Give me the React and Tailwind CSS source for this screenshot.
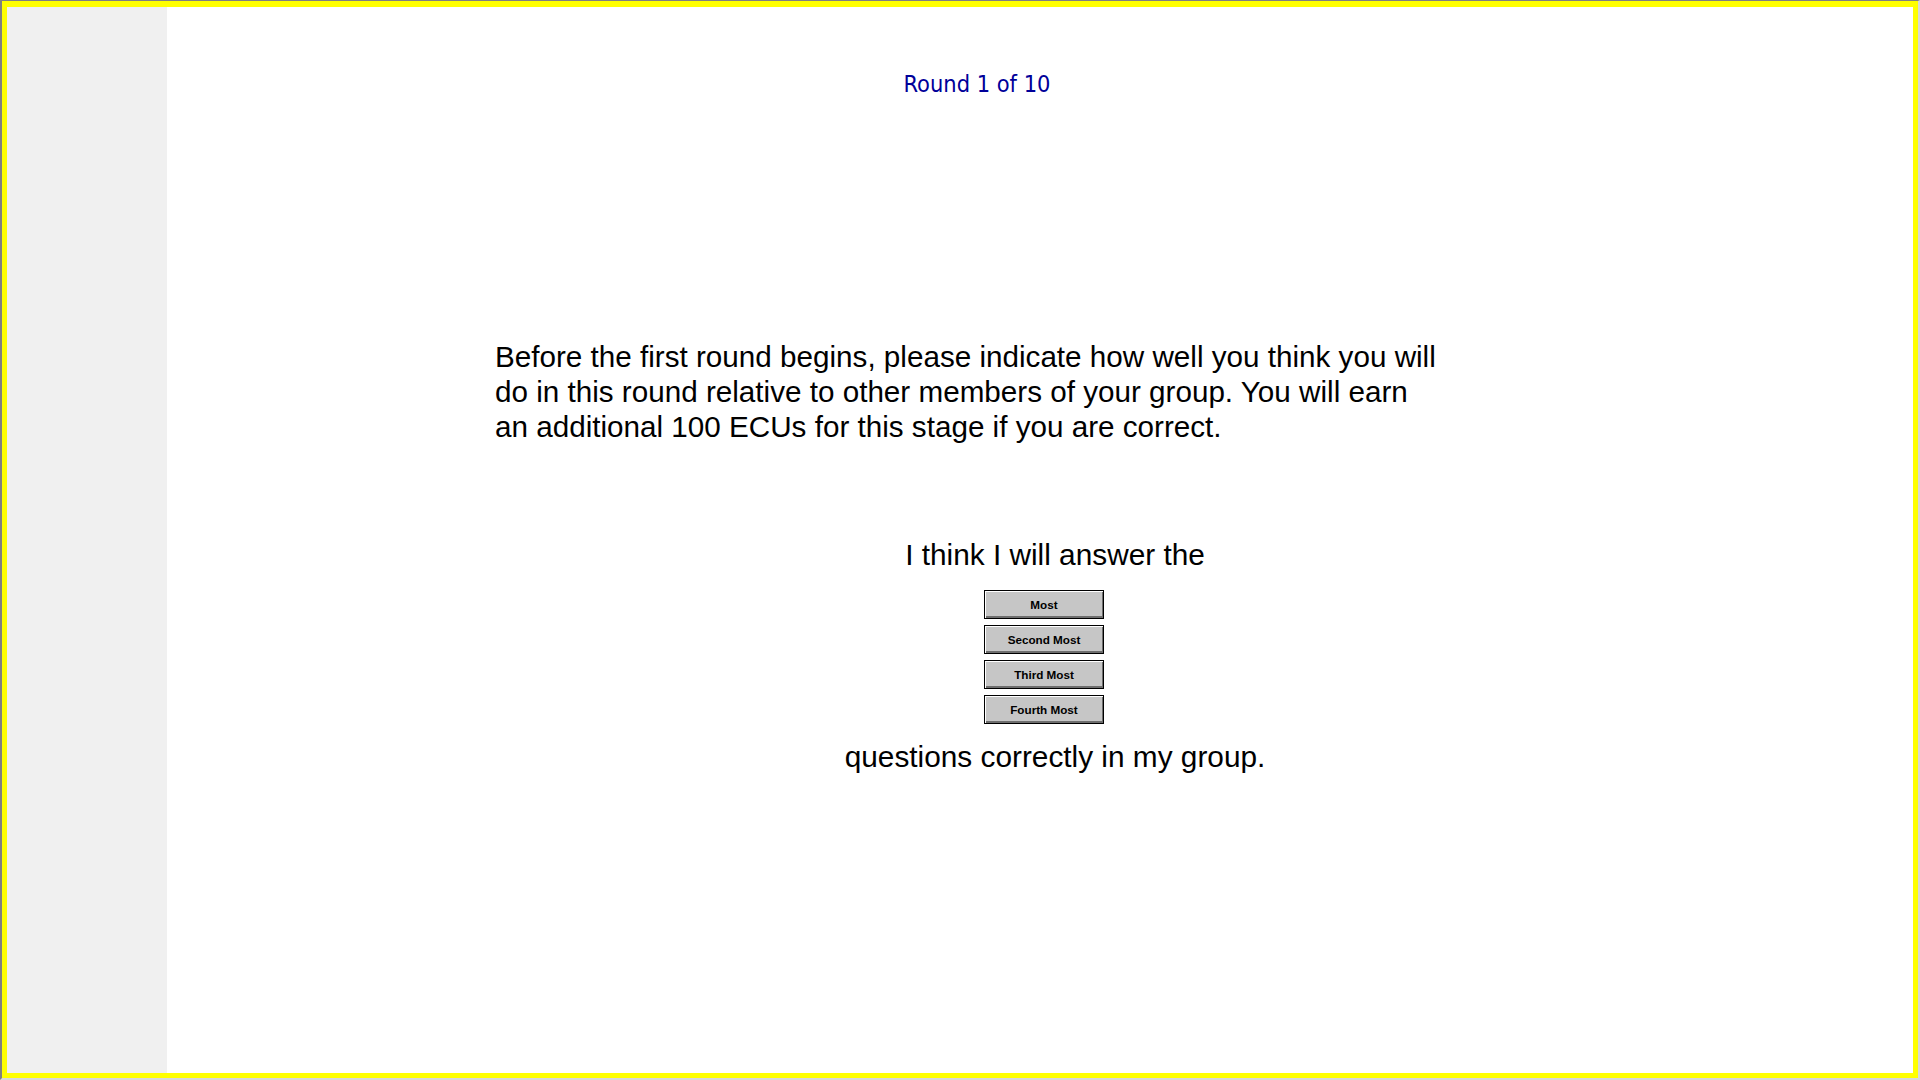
import React from 'react';

const choices = ['Most', 'Second Most', 'Third Most', 'Fourth Most'];

const App = () => {
  return (
    <div className="w-[1920px] h-[1080px] overflow-hidden bg-white border-t border-l-2 border-r-2 border-b-2 border-t-[#808080] border-l-[#808080] border-r-[#d8d8d8] border-b-[#d8d8d8]">
      <div className="h-full flex border-t-[6px] border-l-[5px] border-r-[5px] border-b-[5px] border-[#ffff00]">
        <div className="w-[160px] shrink-0 bg-[#f0f0f0]" />

        <div className="flex-1 flex flex-col bg-white font-['Liberation_Sans',Arial,sans-serif] text-black">
          <div className="pt-[63px] pr-[126px] text-center">
            <span className="font-['DejaVu_Sans_Condensed','DejaVu_Sans',sans-serif] font-stretch-condensed text-[23.4px] leading-[28px] text-[#000099]">
              Round 1 of 10
            </span>
          </div>

          <p className="mt-[240px] pl-[328px] text-[29.65px] leading-[35px]">
            <span className="block whitespace-nowrap">Before the first round begins, please indicate how well you think you will</span>
            <span className="block whitespace-nowrap">do in this round relative to other members of your group. You will earn</span>
            <span className="block whitespace-nowrap">an additional 100 ECUs for this stage if you are correct.</span>
          </p>

          <div className="mt-[93px] pl-[30px] text-center text-[29.8px] leading-[35px]">
            I think I will answer the
          </div>

          <div className="mt-[18px] pl-[8px] flex flex-col items-center gap-[6px]">
            {choices.map((c) => (
              <button
                key={c}
                className="w-[120px] h-[29px] bg-[#c6c6c6] border border-black shadow-[inset_1px_1px_0_#ffffff,inset_-1px_-2px_0_#6e6e6e] text-[11.7px] font-bold text-black leading-none"
              >
                {c}
              </button>
            ))}
          </div>

          <div className="mt-[15px] pl-[30px] text-center text-[29.8px] leading-[35px]">
            questions correctly in my group.
          </div>
        </div>
      </div>
    </div>
  );
};

export default App;
